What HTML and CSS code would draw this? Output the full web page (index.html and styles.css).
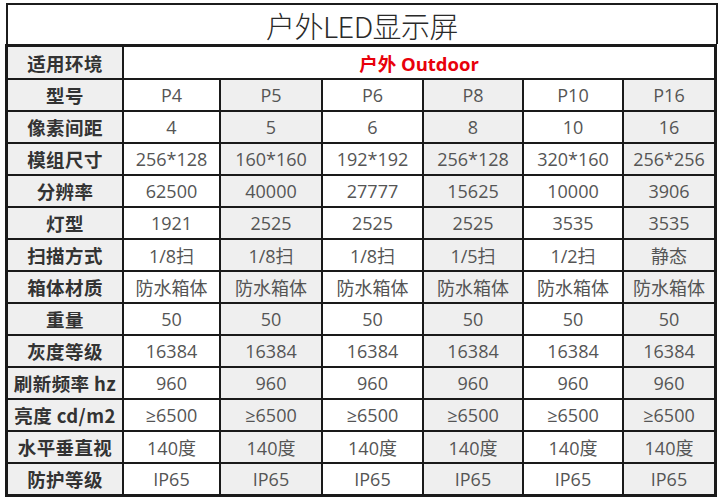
FILE: index.html
```html
<!DOCTYPE html>
<html lang="zh">
<head>
<meta charset="utf-8">
<title>户外LED显示屏</title>
<link rel="stylesheet" href="styles.css">
</head>
<body>
<div class="page">
  <div class="title">户外LED显示屏</div>
  <div class="spec">
    <div class="lab">适用环境</div><div class="env">户外 Outdoor</div>

    <div class="lab">型号</div><div class="v">P4</div><div class="v g">P5</div><div class="v">P6</div><div class="v g">P8</div><div class="v">P10</div><div class="v g">P16</div>
    <div class="lab">像素间距</div><div class="v">4</div><div class="v g">5</div><div class="v">6</div><div class="v g">8</div><div class="v">10</div><div class="v g">16</div>
    <div class="lab">模组尺寸</div><div class="v">256*128</div><div class="v g">160*160</div><div class="v">192*192</div><div class="v g">256*128</div><div class="v">320*160</div><div class="v g">256*256</div>
    <div class="lab">分辨率</div><div class="v">62500</div><div class="v g">40000</div><div class="v">27777</div><div class="v g">15625</div><div class="v">10000</div><div class="v g">3906</div>
    <div class="lab">灯型</div><div class="v">1921</div><div class="v g">2525</div><div class="v">2525</div><div class="v g">2525</div><div class="v">3535</div><div class="v g">3535</div>
    <div class="lab">扫描方式</div><div class="v">1/8扫</div><div class="v g">1/8扫</div><div class="v">1/8扫</div><div class="v g">1/5扫</div><div class="v">1/2扫</div><div class="v g">静态</div>
    <div class="lab">箱体材质</div><div class="v">防水箱体</div><div class="v g">防水箱体</div><div class="v">防水箱体</div><div class="v g">防水箱体</div><div class="v">防水箱体</div><div class="v g">防水箱体</div>
    <div class="lab">重量</div><div class="v">50</div><div class="v g">50</div><div class="v">50</div><div class="v g">50</div><div class="v">50</div><div class="v g">50</div>
    <div class="lab">灰度等级</div><div class="v">16384</div><div class="v g">16384</div><div class="v">16384</div><div class="v g">16384</div><div class="v">16384</div><div class="v g">16384</div>
    <div class="lab">刷新频率 hz</div><div class="v">960</div><div class="v g">960</div><div class="v">960</div><div class="v g">960</div><div class="v">960</div><div class="v g">960</div>
    <div class="lab">亮度 cd/m2</div><div class="v">≥6500</div><div class="v g">≥6500</div><div class="v">≥6500</div><div class="v g">≥6500</div><div class="v">≥6500</div><div class="v g">≥6500</div>
    <div class="lab">水平垂直视</div><div class="v">140度</div><div class="v g">140度</div><div class="v">140度</div><div class="v g">140度</div><div class="v">140度</div><div class="v g">140度</div>
    <div class="lab">防护等级</div><div class="v">IP65</div><div class="v g">IP65</div><div class="v">IP65</div><div class="v g">IP65</div><div class="v">IP65</div><div class="v g">IP65</div>
  </div>
</div>
</body>
</html>
```

FILE: styles.css
```css
html, body {
  margin: 0;
  padding: 0;
  background: #ffffff;
}

.page {
  width: 723px;
  height: 500px;
  padding-top: 3px;
  box-sizing: border-box;
}

.title {
  margin-left: 6px;
  width: 712px;
  height: 41px;
  box-sizing: border-box;
  border: 2px solid #1c1c1c;
  border-bottom: none;
  display: flex;
  align-items: center;
  justify-content: center;
  font-family: "Noto Sans CJK SC", sans-serif;
  font-weight: 300;
  font-size: 29px;
  color: #2a2a2a;
  letter-spacing: -0.5px;
  padding-top: 1px;
}

.spec {
  margin-left: 5px;
  width: 712px;
  box-sizing: border-box;
  padding: 3px;
  background: #1a1a1a;
  display: grid;
  grid-template-columns: 114px 95px 100px 99px 98px 98px 90px;
  grid-template-rows: 31px repeat(13, 30px);
  gap: 2px;
}

.spec > div {
  display: flex;
  align-items: center;
  justify-content: center;
  white-space: nowrap;
}

.lab {
  background: #efefef;
  font-family: "Noto Sans CJK SC", sans-serif;
  font-weight: 700;
  font-size: 18.5px;
  color: #333333;
  letter-spacing: 0.4px;
}

.env {
  grid-column: 2 / span 6;
  background: #ffffff;
  font-family: "Open Sans", "Noto Sans CJK SC", sans-serif;
  font-weight: 700;
  font-size: 18.5px;
  color: #e8000b;
}

.v {
  background: #ffffff;
  font-family: "Open Sans", "Noto Sans CJK SC", sans-serif;
  font-weight: 400;
  font-size: 18px;
  color: #555555;
}

.v.g {
  background: #efefef;
}
```
